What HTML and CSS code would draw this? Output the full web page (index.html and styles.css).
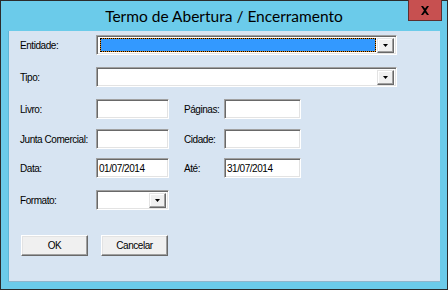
FILE: index.html
```html
<!DOCTYPE html>
<html>
<head>
<meta charset="utf-8">
<link rel="stylesheet" href="styles.css">
</head>
<body>
<div class="window">
  <div class="titlebar">
    <span class="spacer"></span>
    <span class="title">Termo de Abertura / Encerramento</span>
    <span class="close-wrap">
      <span class="close">
        <svg width="10" height="9" viewBox="0 0 10 9"><path d="M1 0h2l2 2.5 2-2.5h2l-3 4.5 3 4.5h-2l-2-2.5-2 2.5h-2l3-4.5z" fill="#000"/></svg>
      </span>
    </span>
  </div>
  <div class="client">
    <div class="row r1">
      <span class="lbl">Entidade:</span>
      <div class="sunken combo wide">
        <div class="focus"><div class="sel"></div></div>
        <span class="ddbtn"><svg width="5" height="3" viewBox="0 0 5 3"><path d="M0 0h5l-2.5 3z" fill="#000"/></svg></span>
      </div>
    </div>
    <div class="row r2">
      <span class="lbl">Tipo:</span>
      <div class="sunken combo wide">
        <div class="empty"></div>
        <span class="ddbtn"><svg width="5" height="3" viewBox="0 0 5 3"><path d="M0 0h5l-2.5 3z" fill="#000"/></svg></span>
      </div>
    </div>
    <div class="row r3">
      <span class="lbl">Livro:</span>
      <div class="sunken box1"></div>
      <span class="lbl2">Páginas:</span>
      <div class="sunken box2"></div>
    </div>
    <div class="row r4">
      <span class="lbl">Junta Comercial:</span>
      <div class="sunken box1"></div>
      <span class="lbl2">Cidade:</span>
      <div class="sunken box2"></div>
    </div>
    <div class="row r5">
      <span class="lbl">Data:</span>
      <div class="sunken box1"><span class="val">01/07/2014</span></div>
      <span class="lbl2">Até:</span>
      <div class="sunken box2"><span class="val">31/07/2014</span></div>
    </div>
    <div class="row r6">
      <span class="lbl">Formato:</span>
      <div class="sunken combo box1">
        <div class="empty"></div>
        <span class="ddbtn"><svg width="5" height="3" viewBox="0 0 5 3"><path d="M0 0h5l-2.5 3z" fill="#000"/></svg></span>
      </div>
    </div>
    <div class="buttons">
      <button class="btn">OK</button>
      <button class="btn">Cancelar</button>
    </div>
  </div>
</div>
</body>
</html>
```

FILE: styles.css
```css
html, body {
  margin: 0;
  padding: 0;
  background: #6bcbea;
}
.window {
  width: 448px;
  height: 290px;
  box-sizing: border-box;
  border: 1px solid #2b2b2b;
  background: #6bcbea;
  display: flex;
  flex-direction: column;
}
.titlebar {
  height: 30px;
  display: grid;
  grid-template-columns: 1fr auto 1fr;
  align-items: start;
}
.title {
  font-family: "Lato", "Open Sans", sans-serif;
  font-size: 15.5px;
  color: #000;
  line-height: 18px;
  margin-top: 6px;
  white-space: nowrap;
}
.close-wrap {
  display: flex;
  justify-content: flex-end;
  padding-right: 5px;
}
.close {
  margin-top: -1px;
  width: 34px;
  height: 21px;
  box-sizing: border-box;
  background: #c75050;
  border: 1px solid #5b2f2f;
  border-top: none;
  display: flex;
  align-items: center;
  justify-content: center;
}
.client {
  margin-left: 7px;
  width: 432px;
  height: 251px;
  box-sizing: border-box;
  background: #d7e4f2;
  border-left: 1px solid #5fb6d6;
  border-bottom: 1px solid #8fb6cc;
  padding-left: 11px;
  display: flex;
  flex-direction: column;
  font-family: "Liberation Sans", Arial, sans-serif;
  font-size: 10px;
  letter-spacing: -0.45px;
  color: #000;
}
.row {
  display: flex;
  align-items: center;
  height: 20px;
}
.r1 { margin-top: 4px; }
.r2 { margin-top: 12px; }
.r3 { margin-top: 12px; }
.r4 { margin-top: 10px; }
.r5 { margin-top: 9px; }
.r6 { margin-top: 12px; }
.lbl {
  width: 76px;
  flex: none;
  padding-top: 1px;
}
.lbl2 {
  width: 40px;
  margin-left: 15px;
  flex: none;
  padding-top: 1px;
}
.sunken {
  height: 20px;
  box-sizing: border-box;
  background: #fff;
  border-top: 1px solid #a0a0a0;
  border-left: 1px solid #a0a0a0;
  border-right: 1px solid #fff;
  border-bottom: 1px solid #fff;
  box-shadow: inset 1px 1px 0 #696969, inset -1px -1px 0 #e3e3e3;
  display: flex;
  align-items: center;
}
.wide { width: 301px; }
.box1 { width: 73px; }
.box2 { width: 77px; }
.val {
  padding-left: 2px;
  padding-top: 1px;
}
.combo {
  padding: 1px 2px 1px 2px;
  align-items: stretch;
}
.focus {
  flex: 1;
  background: #e08a1e;
  border: 1px dotted #000;
  margin: 1px 1px 1px 1px;
  display: flex;
}
.sel {
  flex: 1;
  background: #3399ff;
}
.empty { flex: 1; }
.ddbtn {
  width: 17px;
  height: 15px;
  box-sizing: border-box;
  align-self: center;
  background: #f0f0f0;
  border-top: 1px solid #e3e3e3;
  border-left: 1px solid #e3e3e3;
  border-right: 1px solid #696969;
  border-bottom: 1px solid #696969;
  box-shadow: inset -1px -1px 0 #a0a0a0, inset 1px 1px 0 #fff;
  display: flex;
  align-items: center;
  justify-content: center;
  padding-top: 1px;
}
.buttons {
  margin-top: 25px;
  display: flex;
  gap: 13px;
  padding-left: 1px;
}
.btn {
  width: 67px;
  height: 21px;
  margin: 0;
  padding: 0;
  box-sizing: border-box;
  background: #f0f0f0;
  border-top: 1px solid #fff;
  border-left: 1px solid #fff;
  border-right: 1px solid #696969;
  border-bottom: 1px solid #696969;
  box-shadow: inset -1px -1px 0 #a0a0a0, inset 1px 1px 0 #e3e3e3;
  font-family: "Liberation Sans", Arial, sans-serif;
  font-size: 10px;
  letter-spacing: -0.45px;
  color: #000;
}
```
